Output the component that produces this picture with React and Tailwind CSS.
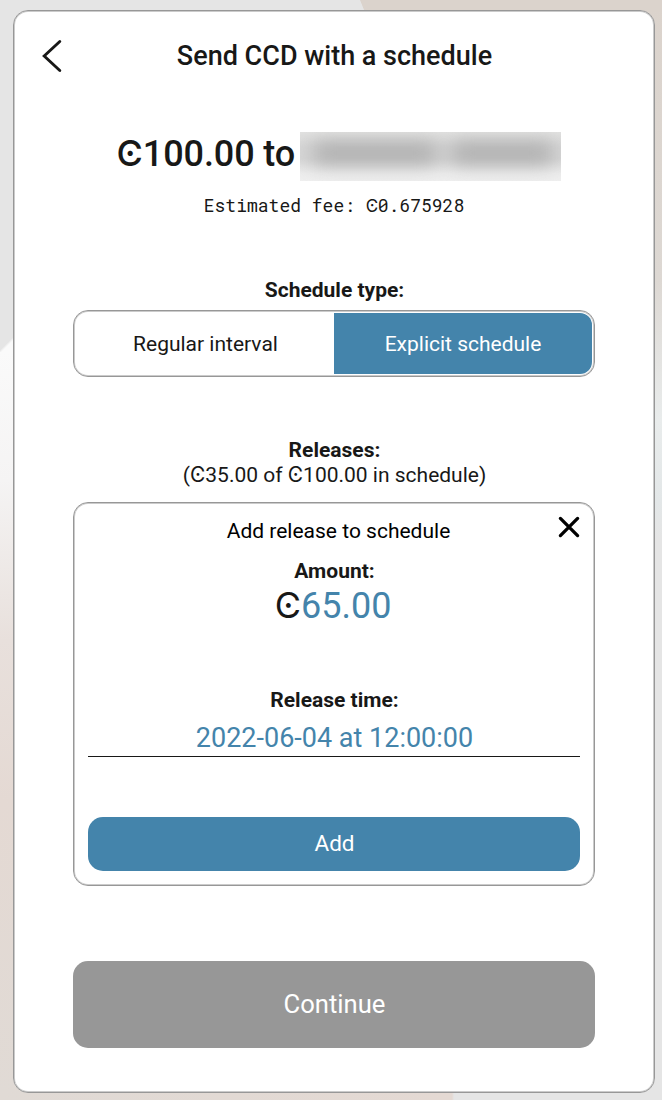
import React from 'react';

function Ccd({ className = '' }) {
  return <span className={`inline-block leading-none font-['Inter',sans-serif] ${className}`}>Ͼ</span>;
}

function Header() {
  return (
    <header className="mt-[20px] flex h-[50px] items-center px-[27px]">
      <button className="flex h-9 w-[24px] items-center" aria-label="Back">
        <svg width="22" height="34" viewBox="0 0 22 34" fill="none" stroke="#181817" strokeWidth="2.9" strokeLinecap="round">
          <path d="M18.8 2.5 3.2 17 18.8 31.5" />
        </svg>
      </button>
      <h1 className="flex-1 pr-[23px] text-center text-[27px] leading-[34px] font-medium">Send CCD with a schedule</h1>
    </header>
  );
}

function ScheduleType() {
  return (
    <section className="mt-[61px]">
      <h3 className="pl-px text-center text-[21px] leading-[25px] font-bold">Schedule type:</h3>
      <div className="mt-[7px] flex h-[67px] rounded-[15px] border border-[#979797] p-[2px] text-[21px] shadow-[inset_0_0_0_1px_#cbcbcb]">
        <button className="flex w-1/2 items-center justify-center pt-[3px] pl-px">Regular interval</button>
        <button className="flex w-1/2 items-center justify-center rounded-r-[12px] bg-[#4484ab] pt-[3px] text-white">Explicit schedule</button>
      </div>
    </section>
  );
}

function AddRelease() {
  return (
    <section className="mt-[14px] flex h-[384px] flex-col rounded-[15px] border border-[#979797] px-[14px] text-center shadow-[inset_0_0_0_1px_#cbcbcb]">
      <div className="mt-[12px] flex h-[32px] items-center">
        <p className="flex-1 pl-[35px] text-[21px] leading-[32px] text-black">Add release to schedule</p>
        <button className="flex w-[26px] justify-end pb-[8px]" aria-label="Close">
          <svg width="22" height="22" viewBox="0 0 22 22" fill="none" stroke="#000" strokeWidth="3.3" strokeLinecap="round">
            <path d="M2.4 2.4 19.6 19.6M19.6 2.4 2.4 19.6" />
          </svg>
        </button>
      </div>
      <h4 className="mt-[12px] pl-px text-[21px] leading-[25px] font-bold">Amount:</h4>
      <p className="h-[44px] pr-[2px] text-[36px] leading-[44px]">
        <Ccd />
        <span className="text-[#4484ab]">65.00</span>
      </p>
      <h4 className="mt-[60px] pl-px text-[21px] leading-[25px] font-bold">Release time:</h4>
      <p className="mt-[8px] h-[36px] border-b border-[#181817] pl-px text-[27px] leading-[34px] text-[#4484ab]">2022-06-04 at 12:00:00</p>
      <button className="mt-[60px] h-[54px] rounded-[15px] bg-[#4484ab] pb-px pl-px text-[22.5px] text-white">Add</button>
    </section>
  );
}

export default function App() {
  return (
    <div className="h-[1100px] w-[662px] pt-[10px] pl-[13px] font-['Roboto',sans-serif] text-[#181817] [background:linear-gradient(68deg,#e5e5e5_0_50%,#dbd3cc_52%)_342px_0/40px_12px_no-repeat,linear-gradient(90deg,#e5e5e5_0_362px,#dbd3cc_366px)_0_0/662px_12px_no-repeat,linear-gradient(90deg,#e0dad5,#e4d9d3_452px,#e5e5e5_454px)_0_1088px/662px_12px_no-repeat,linear-gradient(135deg,#e5e5e5_0_50%,#fafafa_58%)_0_328px/20px_24px_no-repeat,linear-gradient(180deg,#e5e5e5_0_340px,#fafafa_352px,#f5f4f4_480px,#e8e0dc_640px,#e4d9d3_800px,#e0dad5)_0_0/20px_1100px_no-repeat,linear-gradient(180deg,#dbd3cc_0,#ddd8d3_280px,#e9ecec_420px,#e3e7e8_500px,#e5e5e5_540px)_100%_0/20px_1100px_no-repeat]">
      <main className="flex h-[1083px] w-[642px] flex-col rounded-[15px] border border-[#979797] bg-white shadow-[inset_0_0_0_1px_#cbcbcb]">
        <Header />
        <div className="flex flex-col px-[59px]">
          <div className="mt-[50px] flex h-[50px] items-center justify-center pl-[9px]">
            <h2 className="w-[183px] pb-[4px] text-[36px] leading-[44px] font-medium tracking-[-0.1px] whitespace-nowrap">
              <Ccd />
              100.00 to
            </h2>
            <div className="h-[49px] w-[261px] overflow-hidden bg-[linear-gradient(180deg,#e2e2e1,#d6d6d6_30%,#d6d6d6_55%,#ececec_85%,#efefef)]">
              <div className="flex h-[43px] items-center gap-[16px] pl-[14px] blur-[10px]">
                <div className="h-[20px] w-[122px] bg-[#aaaaaa]" />
                <div className="h-[20px] w-[100px] bg-[#aaaaaa]" />
              </div>
            </div>
          </div>
          <p className="mt-[12px] text-center font-['Roboto_Mono',monospace] text-[18px] leading-[24px]">
            Estimated fee: <Ccd className="w-[12px] text-[17px]" />0.675928
          </p>
          <ScheduleType />
          <section className="mt-[61px] pl-px text-center text-[21px] leading-[25px]">
            <h3 className="font-bold">Releases:</h3>
            <p>
              (<Ccd />35.00 of <Ccd />100.00 in schedule)
            </p>
          </section>
          <AddRelease />
          <button className="mt-[75px] h-[87px] rounded-[15px] bg-[#979797] pb-px pl-px text-[25.6px] text-white">Continue</button>
        </div>
      </main>
    </div>
  );
}
